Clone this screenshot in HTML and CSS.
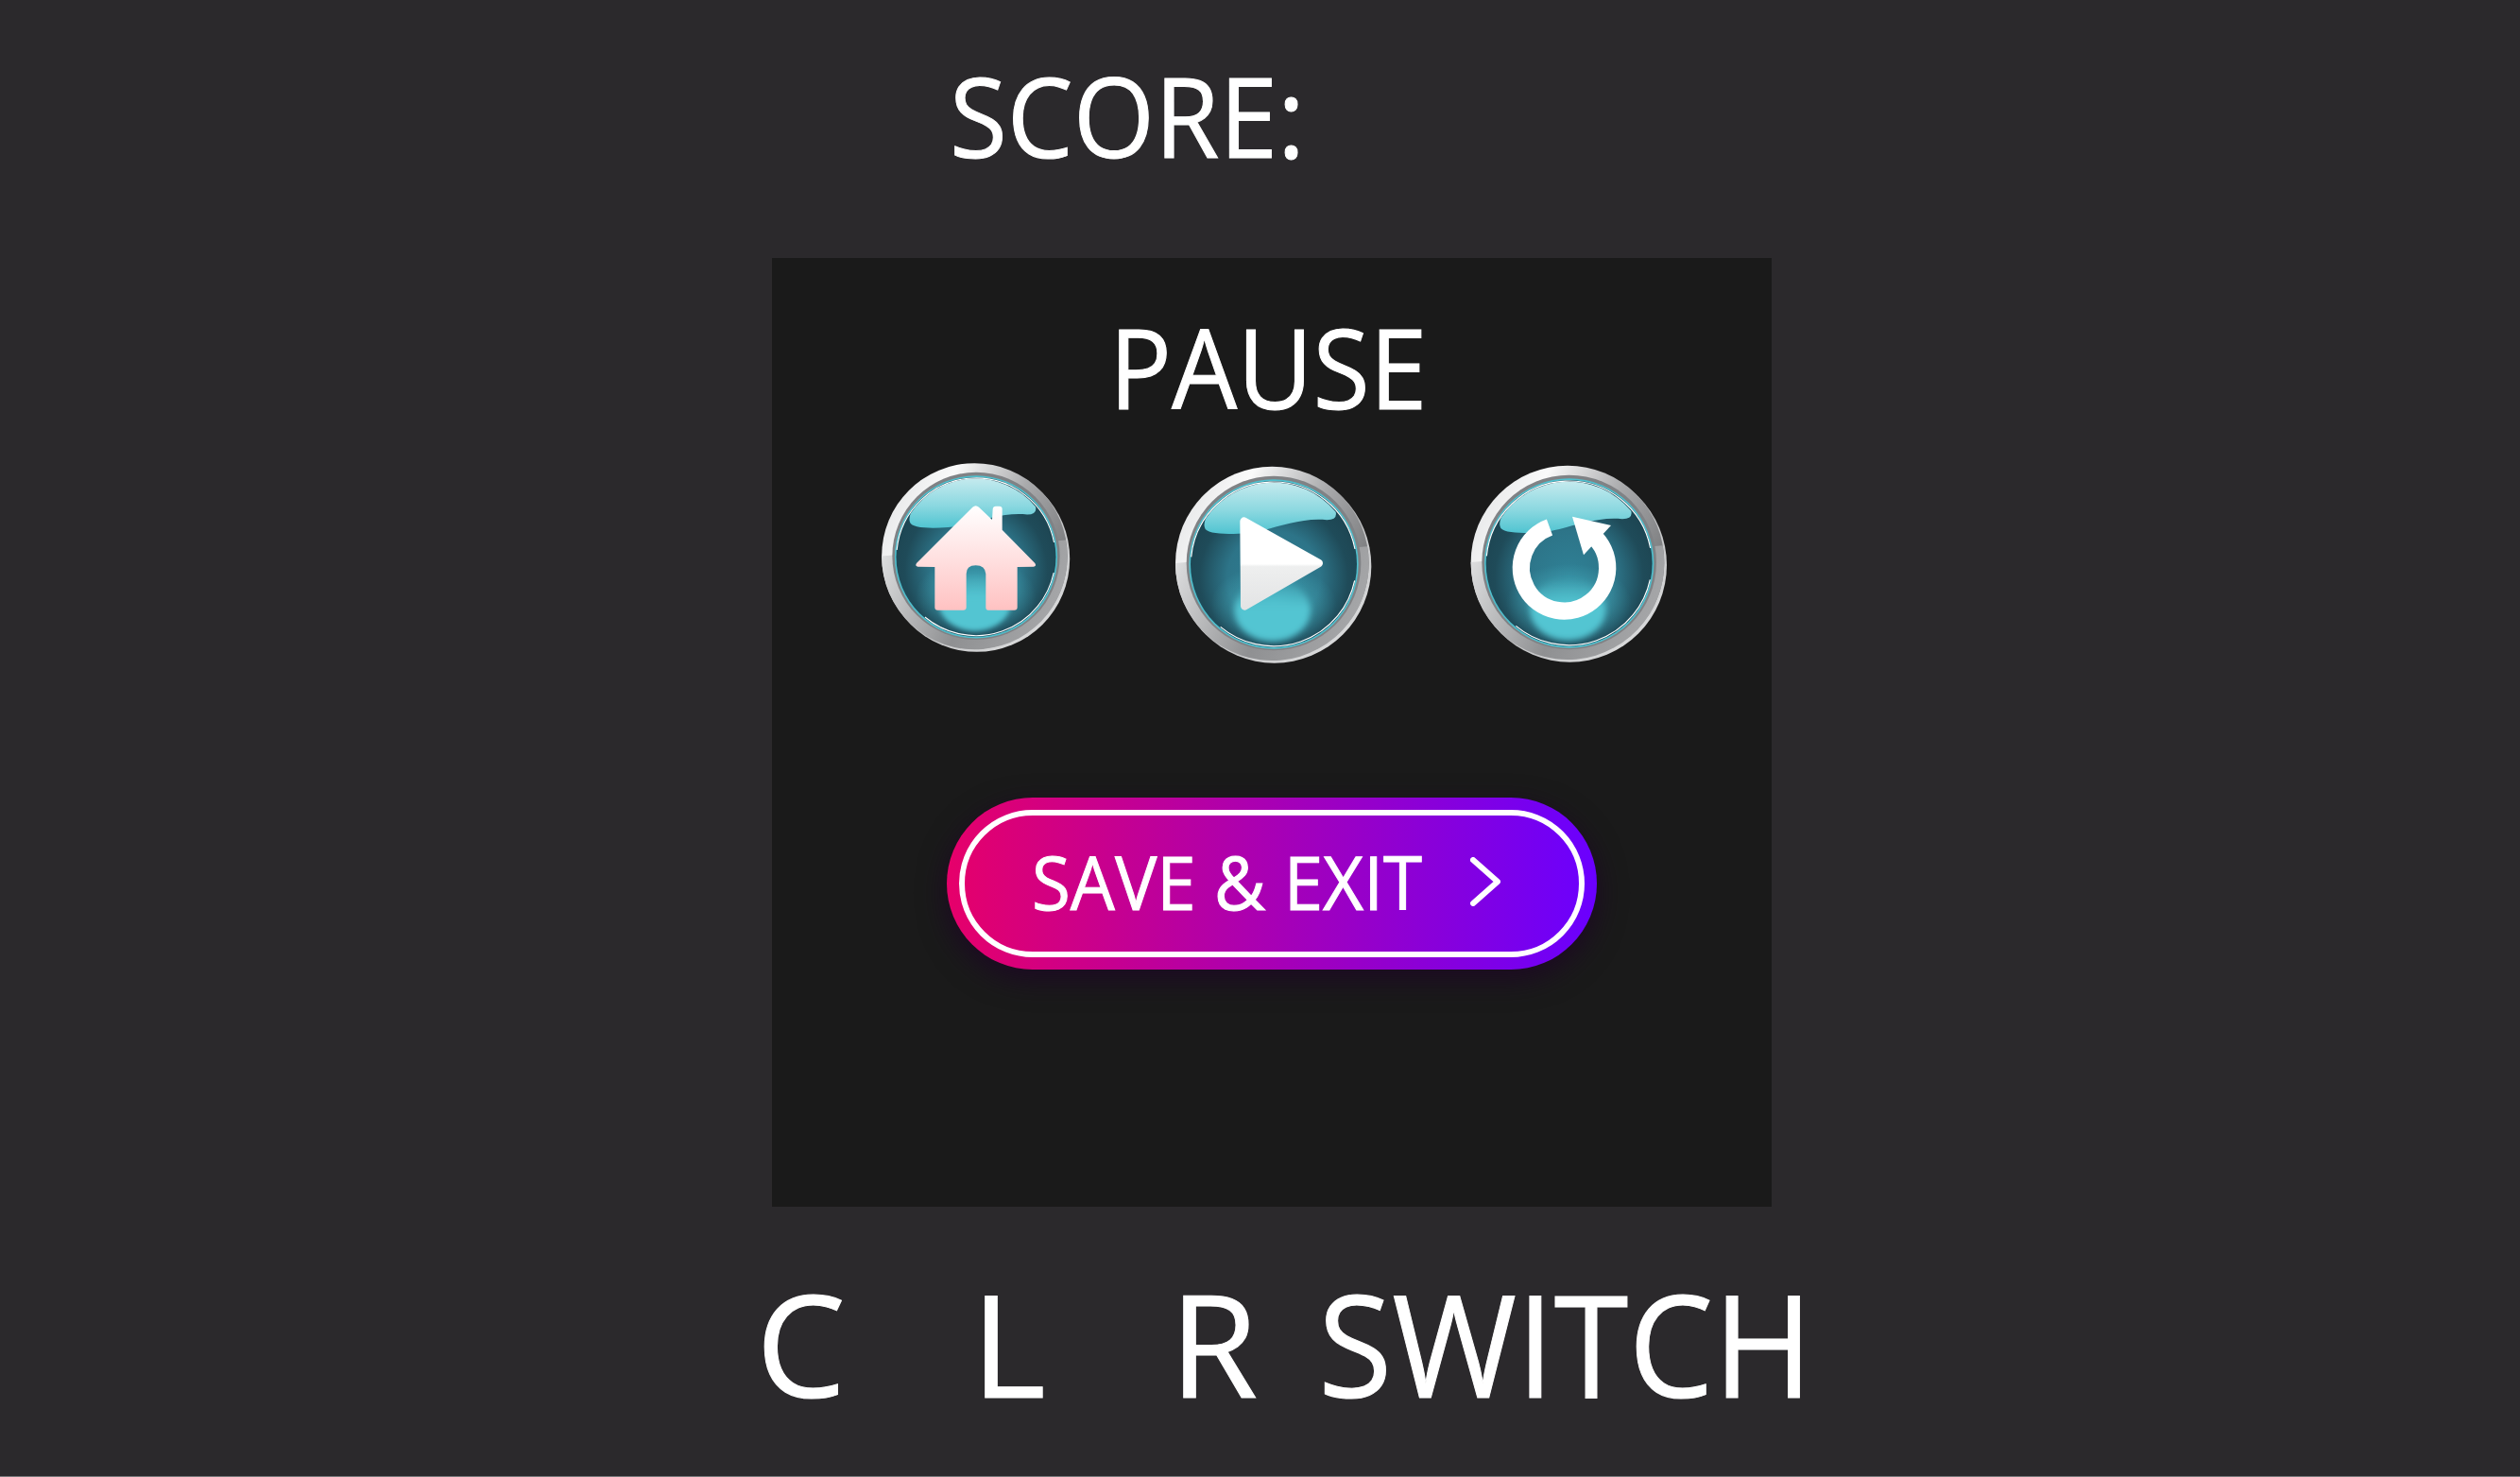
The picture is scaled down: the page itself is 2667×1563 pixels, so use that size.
FILE: index.html
```html
<!DOCTYPE html>
<html lang="en">

<head>
    <meta charset="UTF-8">
    <meta name="viewport" content="width=device-width, initial-scale=1.0">
    <title>Pause</title>
    <link rel="stylesheet" href="styles.css">
</head>

<body>
    <!-- shared gradients and the glass button body -->
    <svg class="svg-defs" width="0" height="0" aria-hidden="true">
        <defs>
            <linearGradient id="ring-top" x1="0.08" y1="0.1" x2="1" y2="0.55">
                <stop offset="0" stop-color="#e6e7e8" />
                <stop offset="0.25" stop-color="#fafafa" />
                <stop offset="0.62" stop-color="#a9aaac" />
                <stop offset="1" stop-color="#77787a" />
            </linearGradient>
            <linearGradient id="ring-low" x1="0" y1="0.1" x2="1" y2="0.35">
                <stop offset="0" stop-color="#dedfe0" />
                <stop offset="0.55" stop-color="#8f9092" />
                <stop offset="1" stop-color="#a5a6a8" />
            </linearGradient>
            <linearGradient id="ring-edge" x1="0.2" y1="0.3" x2="0.8" y2="1">
                <stop offset="0" stop-color="#a9aaac" />
                <stop offset="1" stop-color="#dcddde" />
            </linearGradient>
            <radialGradient id="glass-dark" cx="0.5" cy="0.58" r="0.62">
                <stop offset="0" stop-color="#2f8196" />
                <stop offset="0.45" stop-color="#2d7488" />
                <stop offset="0.72" stop-color="#1f4b59" />
                <stop offset="0.88" stop-color="#1d4552" />
                <stop offset="1" stop-color="#24596a" />
            </radialGradient>
            <radialGradient id="glow-wide">
                <stop offset="0" stop-color="#50c3d0" stop-opacity="0.7" />
                <stop offset="1" stop-color="#50c3d0" stop-opacity="0" />
            </radialGradient>
            <linearGradient id="glow-spot" x1="0" y1="0" x2="0" y2="1">
                <stop offset="0" stop-color="#53c5d2" stop-opacity="0" />
                <stop offset="0.45" stop-color="#53c5d2" />
                <stop offset="1" stop-color="#53c5d2" />
            </linearGradient>
            <filter id="soft" x="-20%" y="-20%" width="140%" height="140%">
                <feGaussianBlur stdDeviation="9" />
            </filter>
            <linearGradient id="gloss" x1="0" y1="0" x2="0" y2="1">
                <stop offset="0" stop-color="#c4eaee" />
                <stop offset="0.55" stop-color="#8bd8e0" />
                <stop offset="1" stop-color="#50c4d1" />
            </linearGradient>
            <linearGradient id="home-fill" x1="0" y1="0" x2="0" y2="1">
                <stop offset="0" stop-color="#ffffff" />
                <stop offset="1" stop-color="#ffc2c2" />
            </linearGradient>
            <linearGradient id="play-fill" gradientUnits="userSpaceOnUse" x1="0" y1="230" x2="0" y2="530">
                <stop offset="0" stop-color="#ffffff" />
                <stop offset="0.5" stop-color="#ffffff" />
                <stop offset="0.53" stop-color="#eeefef" />
                <stop offset="1" stop-color="#e2e3e4" />
            </linearGradient>
            <g id="glass">
                <circle cx="3" cy="4" r="308" fill="url(#ring-edge)" />
                <circle cx="-4" cy="-5" r="307" fill="url(#ring-top)" />
                <path d="M-311,-5 A307 307 0 1 0 298,-58 Z" fill="url(#ring-low)" />
                <circle cx="1" cy="-5" r="277" fill="#808285" />
                <circle cx="1" cy="-2" r="269" fill="#4fbfcd" />
                <circle cx="1" cy="-2" r="264" fill="url(#glass-dark)" />
                <ellipse cx="0" cy="125" rx="200" ry="125" fill="url(#glow-wide)" />
                <ellipse cx="-3" cy="145" rx="120" ry="98" fill="url(#glow-spot)" filter="url(#soft)" />
                <path d="M-218,-118 Q-222,-130 -215,-146 A258 258 0 0 1 198,-168 Q204,-142 170,-142 C100,-150 30,-125 -30,-110 C-90,-95 -215,-90 -218,-118 Z" fill="url(#gloss)" />
                <path d="M-261,-25 A263 263 0 0 1 259,-50" fill="none" stroke="#fff" stroke-width="3.5" />
                <path d="M-168,197 A263 263 0 0 0 258,50" fill="none" stroke="#fff" stroke-width="3.5" />
            </g>
        </defs>
    </svg>

    <div class="score">SCORE:</div>

    <div class="pause-panel">
        <div class="pause-title">PAUSE</div>

        <div class="round-buttons">
            <!-- home -->
            <svg class="round-btn" viewBox="0 0 780 720">
                <use href="#glass" transform="translate(398 360) scale(0.96)" />
                <path d="M388,200 Q398,191 408,200 L450,240 L452,206 Q453,197 462,197 L473,197 Q482,197 482,206 L482,272 L586,378 Q592,388 582,389 L530,390 L530,518 Q530,527 520,527 L438,527 Q430,527 430,518 L430,412 Q428,385 398,385 Q368,385 368,412 L368,518 Q368,527 358,527 L277,527 Q268,527 268,518 L268,390 L214,389 Q204,388 210,378 Z" fill="url(#home-fill)" />
            </svg>
            <!-- play -->
            <svg class="round-btn" viewBox="0 0 780 720">
                <use href="#glass" transform="translate(383 383)" />
                <path d="M290,245 L527,378 L292,514 Z" fill="url(#play-fill)" stroke="url(#play-fill)" stroke-width="26" stroke-linejoin="round" />
            </svg>
            <!-- restart -->
            <svg class="round-btn" viewBox="0 0 780 720">
                <use href="#glass" transform="translate(361 380)" />
                <path d="M437,290 A137 137 0 1 1 300,264" fill="none" stroke="#fff" stroke-width="55" />
                <path d="M372,230 L495,258 L408,352 Z" fill="#fff" />
            </svg>
        </div>

        <a href="#" class="save-btn">
            <span class="save-inner">
                <span class="save-label">SAVE &amp; EXIT</span>
                <svg class="save-arrow" viewBox="0 0 32 52">
                    <path d="M3,3 L29,26 L3,49" fill="none" stroke="#fff" stroke-width="6" stroke-linecap="round" stroke-linejoin="round" />
                </svg>
            </span>
        </a>
    </div>

    <div class="key-row">
        <span class="key">C</span>
        <span class="key">L</span>
        <span class="key">R</span>
        <span class="key key-wide">SWITCH</span>
    </div>
</body>

</html>
```

FILE: styles.css
```css
* {
    box-sizing: border-box;
}

body {
    margin: 0;
    padding: 0;
    height: 1563px;
    overflow: hidden;
    background-color: #2b292c;
    border-bottom: 1px solid #77777a;
    color: #fff;
    font-family: "Open Sans", "Noto Sans", sans-serif;
    -webkit-text-stroke: 1px #fff;
}

.svg-defs {
    display: block;
    height: 0;
}

.score {
    height: 273px;
    padding: 63px 0 0 1005px;
    font-size: 118px;
    line-height: 118px;
    transform: scaleX(0.94);
    transform-origin: 1005px 0;
}

.pause-panel {
    width: 1058px;
    height: 1004px;
    margin-left: 817px;
    padding-top: 56px;
    background-color: #1a1a1a;
}

.pause-title {
    height: 141px;
    padding-right: 7px;
    font-size: 118px;
    line-height: 118px;
    text-align: center;
    transform: scaleX(0.93);
    transform-origin: 522px 0;
}

.round-buttons {
    display: flex;
    flex-flow: row nowrap;
    gap: 60px;
    padding-left: 83px;
}

.round-btn {
    display: block;
    width: 260px;
    height: 240px;
}

.save-btn {
    display: block;
    width: 688px;
    height: 182px;
    margin: 134px 0 0 185px;
    padding: 13px;
    border-radius: 91px;
    background-image: linear-gradient(90deg, #e6006a 0%, #6a00ff 100%);
    box-shadow: 0 10px 30px rgba(30, 0, 40, 0.7);
    color: #fff;
    text-decoration: none;
}

.save-inner {
    display: flex;
    flex-flow: row nowrap;
    align-items: center;
    height: 100%;
    padding: 0 0 5px 71px;
    border: 6px solid #fff;
    border-radius: 78px;
}

.save-label {
    width: 464px;
    font-size: 78px;
    line-height: 78px;
    white-space: pre;
    transform: scaleX(0.955);
    transform-origin: 0 0;
}

.save-arrow {
    display: block;
    width: 32px;
    height: 52px;
}

.key-row {
    display: grid;
    grid-template-columns: 228px 210px 157px auto;
    padding: 68px 0 0 800px;
    font-size: 151px;
    line-height: 151px;
}

.key-wide {
    transform: scaleX(0.945);
    transform-origin: 0 0;
}
```
